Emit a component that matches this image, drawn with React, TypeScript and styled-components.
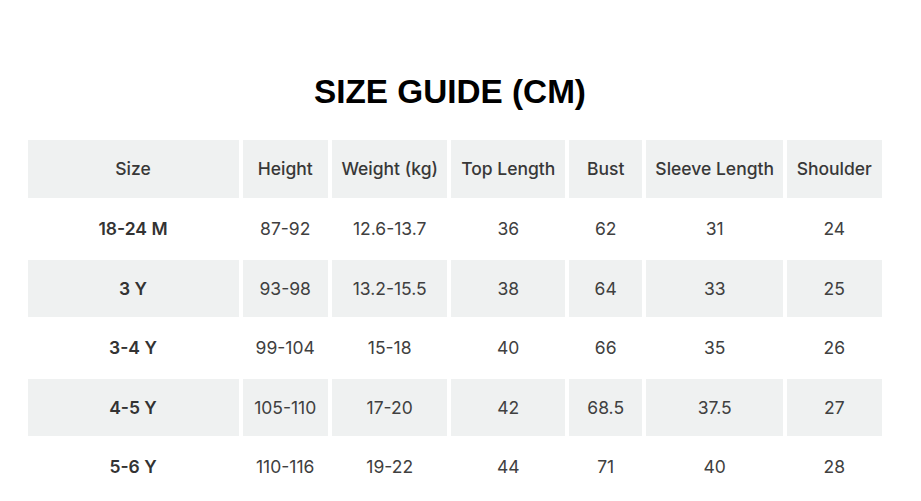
import React from "react";
import styled, { createGlobalStyle } from "styled-components";

const GlobalStyle = createGlobalStyle`
  html, body {
    margin: 0;
    padding: 0;
    background: #fff;
  }
`;

const headers = [
  "Size",
  "Height",
  "Weight (kg)",
  "Top Length",
  "Bust",
  "Sleeve Length",
  "Shoulder",
];

const widths = [210, 85, 115, 113, 73, 136, 94];

const rows = [
  ["18-24 M", "87-92", "12.6-13.7", "36", "62", "31", "24"],
  ["3 Y", "93-98", "13.2-15.5", "38", "64", "33", "25"],
  ["3-4 Y", "99-104", "15-18", "40", "66", "35", "26"],
  ["4-5 Y", "105-110", "17-20", "42", "68.5", "37.5", "27"],
  ["5-6 Y", "110-116", "19-22", "44", "71", "40", "28"],
];

const App: React.FC = () => {
  return (
    <Page>
      <GlobalStyle />
      <Wrapper>
        <Title>SIZE GUIDE (CM)</Title>
        <Table>
          <colgroup>
            {widths.map((w, i) => (
              <col key={i} style={{ width: w }} />
            ))}
          </colgroup>
          <thead>
            <Row $shaded>
              {headers.map((h) => (
                <HeadCell key={h}>{h}</HeadCell>
              ))}
            </Row>
          </thead>
          <tbody>
            {rows.map((r, i) => (
              <Row key={r[0]} $shaded={i % 2 === 1}>
                {r.map((v, j) => (
                  <Cell key={j} $strong={j === 0}>
                    {v}
                  </Cell>
                ))}
              </Row>
            ))}
          </tbody>
        </Table>
      </Wrapper>
    </Page>
  );
};

const Page = styled.div`
  width: 921px;
  height: 501px;
  overflow: hidden;
  background: #fff;
`;

const Wrapper = styled.div`
  width: 862px;
  margin-left: 23.5px;
  padding-top: 73px;
  display: flex;
  flex-direction: column;
  align-items: center;
`;

const Title = styled.h1`
  margin: 0 9px 28px 0;
  font-family: "Liberation Sans", Arial, sans-serif;
  font-weight: 700;
  font-size: 33.3px;
  line-height: 38px;
  color: #000;
`;

const Table = styled.table`
  width: 862px;
  table-layout: fixed;
  border-collapse: separate;
  border-spacing: 4.5px 3px;
  margin-top: -2px;
  font-family: Inter, "Noto Sans", sans-serif;
  color: #383838;
`;

const Row = styled.tr<{ $shaded?: boolean }>`
  th,
  td {
    background: ${(p) => (p.$shaded ? "#eff1f1" : "#fff")};
  }
`;

const HeadCell = styled.th`
  height: 57.5px;
  padding: 0;
  font-size: 17.5px;
  font-weight: 500;
  text-align: center;
  white-space: nowrap;
`;

const Cell = styled.td<{ $strong?: boolean }>`
  height: 56.5px;
  padding: 0;
  font-size: 17.5px;
  font-weight: ${(p) => (p.$strong ? 600 : 400)};
  color: ${(p) => (p.$strong ? "#333" : "#404040")};
  text-align: center;
  white-space: nowrap;
`;

export default App;
